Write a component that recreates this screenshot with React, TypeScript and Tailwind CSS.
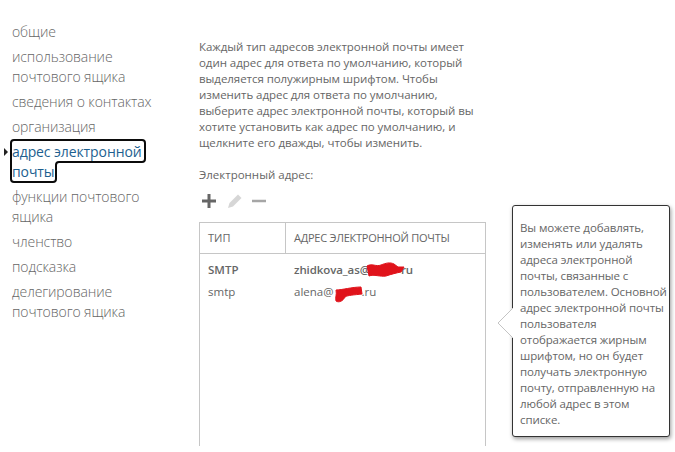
const navItems = [
  "общие",
  "использование почтового ящика",
  "сведения о контактах",
  "организация",
  "адрес электронной почты",
  "функции почтового ящика",
  "членство",
  "подсказка",
  "делегирование почтового ящика",
];

// red marker blotches painted over part of the addresses
function Scribble({ d, width }: { d: string; width: number }) {
  return (
    <svg width={width} height="20" viewBox={`0 0 ${width} 20`} className="absolute left-0 top-0 overflow-visible">
      <path d={d} fill="#e0131b" stroke="#e0131b" strokeWidth="1" strokeLinejoin="round" />
    </svg>
  );
}

export default function App() {
  return (
    <div className="relative flex h-[452px] w-[675px] overflow-hidden bg-white font-['Open_Sans','Noto_Sans',sans-serif] text-[#666666]">
      <nav className="flex w-[199px] shrink-0 flex-col gap-[5px] pl-3 pt-[22px] pr-[30px] text-[14px] font-light leading-5 tracking-[-0.1px] text-[#666666]">
        {navItems.map((item) =>
          item === "адрес электронной почты" ? (
            <div key={item} className="relative font-normal tracking-[-0.1px] text-[#1d5f8f]">
              <span className="absolute left-[-8px] top-[6px] h-0 w-0 border-y-[4px] border-l-[4px] border-y-transparent border-l-[#222222]" />
              <div>адрес электронной</div>
              <div>почты</div>
              <svg width="140" height="46" viewBox="0 0 140 46" className="absolute left-[-2px] top-[-3px] overflow-visible">
                <path
                  d="M4 1H132a3 3 0 0 1 3 3V20a3 3 0 0 1-3 3H49a3 3 0 0 0-3 3V40a3 3 0 0 1-3 3H4a3 3 0 0 1-3-3V4a3 3 0 0 1 3-3Z"
                  fill="none"
                  stroke="#0b0b0b"
                  strokeWidth="2"
                />
              </svg>
            </div>
          ) : (
            <div key={item}>{item}</div>
          ),
        )}
      </nav>

      <main className="w-[288px] shrink-0 pt-[39px] text-[11.5px] leading-4">
        <p className="w-[280px] tracking-[-0.05px]">
          Каждый тип адресов электронной почты имеет один адрес для ответа по умолчанию, который выделяется полужирным шрифтом. Чтобы изменить адрес для ответа по умолчанию, выберите адрес электронной почты, который вы хотите установить как адрес по умолчанию, и щелкните его дважды, чтобы изменить.
        </p>
        <div className="mt-[16px]">Электронный адрес:</div>
        <div className="mt-[6px] flex h-[24px] items-center pl-[2px]">
          <svg width="16" height="16" viewBox="0 0 16 16">
            <path d="M8 1v14M1 8h14" stroke="#666666" strokeWidth="3" />
          </svg>
          <svg width="18" height="18" viewBox="0 0 18 18" className="ml-[9px]">
            <path d="M2 16l1.5-5L12 2.5l3.5 3.5L7 14.5Z" fill="#d6d6d6" />
          </svg>
          <svg width="16" height="16" viewBox="0 0 16 16" className="ml-[7px]">
            <path d="M1 8h14" stroke="#a6a6a6" strokeWidth="2.5" />
          </svg>
        </div>
        <div className="mt-[9px] h-[224px] w-[287px] border border-b-0 border-[#c6c6c6]">
          <div className="flex h-[31px] items-center border-b border-[#c6c6c6] text-[11px]">
            <div className="flex h-full w-[86px] items-center border-r border-[#c6c6c6] pl-[8px]">ТИП</div>
            <div className="pl-[8px] tracking-[-0.25px]">АДРЕС ЭЛЕКТРОННОЙ ПОЧТЫ</div>
          </div>
          <div className="pt-[5px]">
            <div className="flex h-[22px] items-center font-semibold">
              <div className="w-[86px] pl-[8px]">SMTP</div>
              <div className="relative pl-[8px] tracking-[-0.1px]">
                zhidkova_as@<span className="inline-block w-[31px]" />ru
                <Scribble width={60} d="M81 4C86 1 90 5 95 3C100 1 104 0 108 2L112 5L118 5L115 10C110 11 106 12 100 14C94 15 88 12 83 14Z" />
              </div>
            </div>
            <div className="flex h-[22px] items-center">
              <div className="w-[86px] pl-[8px]">smtp</div>
              <div className="relative pl-[8px]">
                alena@<span className="inline-block w-[28px]" />.ru
                <Scribble width={60} d="M50 6C56 6 66 3 75 3L76 10C68 11 62 11 59 13C57 17 53 19 50 17C49 13 51 11 50 6Z" />
              </div>
            </div>
          </div>
        </div>
      </main>

      <div className="absolute left-[512px] top-[205px] h-[232px] w-[158px] rounded-[3px] border border-[#333333] bg-white pl-[7px] pr-[1px] pt-[14px] text-[11.5px] leading-[16px] tracking-[-0.1px] shadow-[1px_2px_4px_rgba(0,0,0,0.4)]">
        Вы можете добавлять, изменять или удалять адреса электронной почты, связанные с пользователем. Основной адрес электронной почты пользователя отображается жирным шрифтом, но он будет получать электронную почту, отправленную на любой адрес в этом списке.
      </div>
      <svg width="16" height="32" viewBox="0 0 16 32" className="absolute left-[497px] top-[307px]">
        <path d="M16 1L1 16L16 31" fill="#ffffff" stroke="#c4c4c4" />
      </svg>
    </div>
  );
}
